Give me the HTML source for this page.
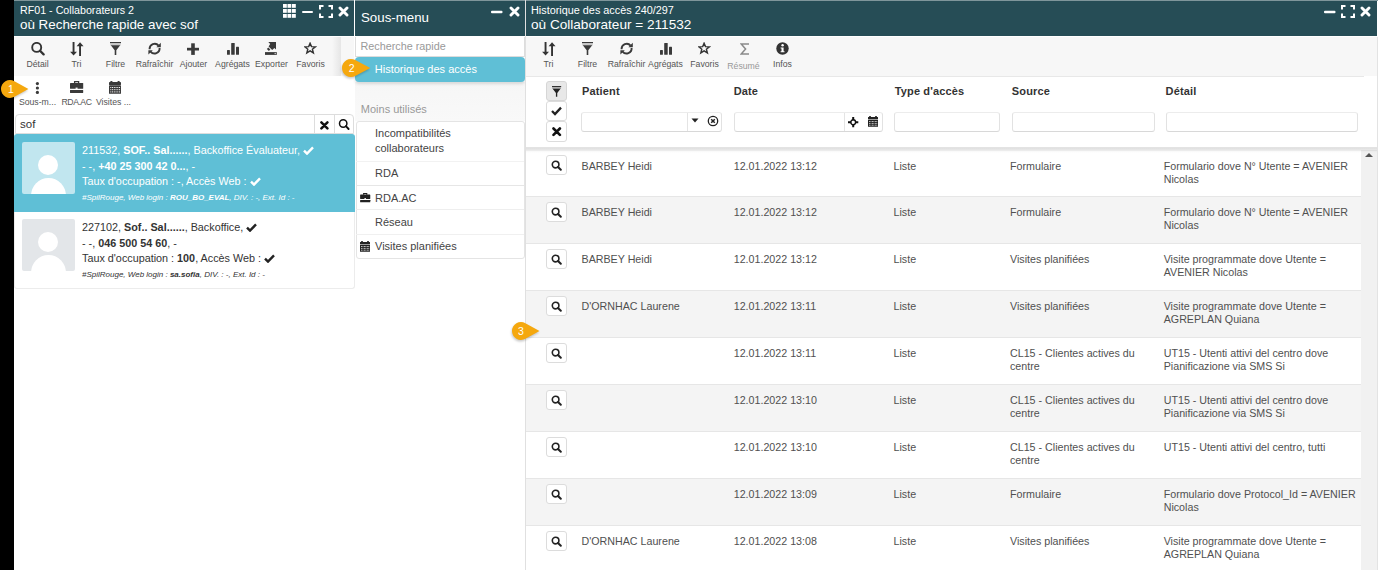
<!DOCTYPE html>
<html><head><meta charset="utf-8">
<style>
*{box-sizing:border-box;margin:0;padding:0}
html,body{width:1378px;height:570px;overflow:hidden;background:#fff;font-family:"Liberation Sans",sans-serif;color:#333}
.a{position:absolute}
.blk{left:0;top:0;width:14px;height:570px;background:#000}
.strip{top:0;height:1px;background:#7f969b}
.hdr{top:1px;height:35px;background:#264d56;color:#fff}
.hline{top:36px;height:1px;background:#fff}
.vsep{top:0;width:1px;height:570px;background:#e6e6e6}
.tb{top:37px;height:39px;background:#f7f7f7}
.btn{position:absolute;width:39px;text-align:center;font-size:9px;color:#555;white-space:nowrap}
.btn svg{position:absolute;left:13px;top:5px}
.btn span{position:absolute;left:0;right:0;top:20px;line-height:11px}
svg{display:block}
.t{position:absolute;white-space:nowrap}
.it{font-size:10.8px;line-height:13px;color:#333}
.sm{font-size:8px;line-height:11px;font-style:italic;color:#333}
.sub{font-size:11px;line-height:13px;color:#444}
.th{top:84px;font-size:11px;line-height:14px;font-weight:bold;color:#333;letter-spacing:0.15px}
.inp{top:112px;height:19.5px;border:1px solid;border-color:#ececec #e2e2e2 #d8d8d8 #e2e2e2;border-radius:3px;background:#fff}
.row{left:0;width:835px;height:47px;border-top:1px solid #e6e6e6}
.sb{left:20px;top:5px;width:21px;height:20px;border:1px solid #dcdcdc;border-radius:3px;background:#fff}
.td{top:9px;font-size:10.7px;line-height:13px;color:#505050}
.lbl{top:59px;font-size:8.7px;line-height:11px;text-align:center;color:#555}
</style></head><body>
<div class="a blk"></div>

<!-- ========== PANEL 1 ========== -->
<div class="a strip" style="left:14px;width:1364px"></div>
<div class="a hdr" style="left:14px;width:340px">
  <div class="t" style="left:6px;top:3px;font-size:10.7px;line-height:13px">RF01 - Collaborateurs 2</div>
  <div class="t" style="left:6px;top:15px;font-size:13.4px;line-height:17px">où Recherche rapide avec sof</div>
</div>
<div class="a hline" style="left:14px;width:340px"></div>
<div class="a" style="left:354px;top:0;width:1px;height:570px;background:#fff"></div>
<div class="a tb" style="left:14px;width:340px"></div>

<!-- p1 header icons -->
<svg class="a" style="left:282px;top:4px" width="15" height="15" viewBox="0 0 15 15" fill="#fff">
<rect x="1" y="0" width="3.8" height="3.8"/><rect x="5.5" y="0" width="3.8" height="3.8"/><rect x="10" y="0" width="3.8" height="3.8"/>
<rect x="1" y="5" width="3.8" height="3.8"/><rect x="5.5" y="5" width="3.8" height="3.8"/><rect x="10" y="5" width="3.8" height="3.8"/>
<rect x="1" y="10" width="3.8" height="3.8"/><rect x="5.5" y="10" width="3.8" height="3.8"/><rect x="10" y="10" width="3.8" height="3.8"/>
</svg>
<div class="a" style="left:302px;top:11px;width:11px;height:2.4px;background:#fff;border-radius:1px"></div>
<svg class="a" style="left:319px;top:5px" width="14" height="13" viewBox="0 0 14 13" fill="none" stroke="#fff" stroke-width="2">
<path d="M1 4.5V1H4.5M9.5 1H13V4.5M13 8.5V12H9.5M4.5 12H1V8.5"/></svg>
<svg class="a" style="left:338px;top:6px" width="11" height="11" viewBox="0 0 11 11" stroke="#fff" stroke-width="2.9" stroke-linecap="round"><path d="M2 2L9 9M9 2L2 9"/></svg>

<!-- p1 toolbar -->
<div class="a" style="left:332px;top:37px;width:9px;height:39px;background:linear-gradient(to right,rgba(0,0,0,0),rgba(0,0,0,0.07))"></div>
<svg class="a" style="left:31px;top:42px" width="14" height="14" viewBox="0 0 14 14" fill="none" stroke="#333">
<circle cx="5.7" cy="5.4" r="4.5" stroke-width="1.9"/><path d="M9 8.8L12.6 12.4" stroke-width="2.3" stroke-linecap="round"/></svg>
<div class="t lbl" style="left:14px;width:47px">Détail</div>
<svg class="a" style="left:70px;top:42px" width="14" height="14" viewBox="0 0 14 14" fill="#333">
<rect x="2.6" y="0" width="1.9" height="11"/><path d="M0.1 9.8H7L3.55 13.6Z"/>
<rect x="9.1" y="3" width="1.9" height="11"/><path d="M6.6 4.2H13.5L10.05 0.2Z"/></svg>
<div class="t lbl" style="left:53px;width:47px">Tri</div>
<svg class="a" style="left:110px;top:42px" width="12" height="13" viewBox="0 0 12 13">
<rect x="0" y="0" width="11" height="1.3" fill="#3a3a3a"/><rect x="0.3" y="1.3" width="10.4" height="2.2" fill="#c8c8c8"/>
<path d="M0.8 3.3H10.2L6.3 8.2V12.9H4.7V8.2Z" fill="#3a3a3a"/></svg>
<div class="t lbl" style="left:92px;width:47px">Filtre</div>
<svg class="a" style="left:148px;top:42px" width="14" height="14" viewBox="0 0 14 14">
<path d="M1.6 7.2A5.1 5.1 0 0 1 10.6 3.6" fill="none" stroke="#3a3a3a" stroke-width="1.9"/>
<path d="M12.8 0.8V5.2H8.4Z" fill="#3a3a3a"/>
<path d="M11.6 6A5.1 5.1 0 0 1 2.6 9.6" fill="none" stroke="#3a3a3a" stroke-width="1.9"/>
<path d="M0.4 12.6V8.2H4.8Z" fill="#3a3a3a"/></svg>
<div class="t lbl" style="left:131px;width:47px">Rafraîchir</div>
<svg class="a" style="left:187px;top:43px" width="12" height="12" viewBox="0 0 12 12" fill="#3a3a3a">
<rect x="4.2" y="0.3" width="3.6" height="11.6"/><rect x="0" y="4.8" width="12" height="2.7"/></svg>
<div class="t lbl" style="left:170px;width:47px">Ajouter</div>
<svg class="a" style="left:227px;top:43px" width="13" height="12" viewBox="0 0 13 12" fill="#3a3a3a">
<rect x="0" y="6.9" width="2.9" height="4.9" rx="0.5"/><rect x="4.2" y="0" width="3.5" height="11.8" rx="0.6"/><rect x="9" y="3.7" width="3" height="8.1" rx="0.5"/></svg>
<div class="t lbl" style="left:209px;width:47px">Agrégats</div>
<svg class="a" style="left:265px;top:42px" width="12" height="13" viewBox="0 0 12 13" fill="#3a3a3a">
<rect x="0" y="10.1" width="11.8" height="2.8"/><circle cx="10.2" cy="11.5" r="0.7" fill="#ddd"/>
<path d="M3.3 0.1H11V7.5L9.4 5.9L7.2 8.1L3.6 4.5L5.2 2Z"/><path d="M2.6 6.2L4.6 8.2" stroke="#3a3a3a" stroke-width="2"/></svg>
<div class="t lbl" style="left:248px;width:47px">Exporter</div>
<svg class="a" style="left:304px;top:42px" width="13" height="13" viewBox="0 0 13 13">
<path d="M6.1 1.2L7.5 4.6L11.4 4.8L8.4 7.2L9.4 10.9L6.1 8.9L2.8 10.9L3.8 7.2L0.8 4.8L4.7 4.6Z" fill="none" stroke="#333" stroke-width="1.4" stroke-linejoin="miter"/></svg>
<div class="t lbl" style="left:287px;width:47px">Favoris</div>
<!-- row 2 -->
<svg class="a" style="left:35px;top:82px" width="5" height="12" viewBox="0 0 5 12" fill="#3a3a3a">
<circle cx="2.4" cy="1.6" r="1.6"/><circle cx="2.4" cy="6" r="1.6"/><circle cx="2.4" cy="10.4" r="1.6"/></svg>
<div class="t lbl" style="left:14px;width:47px;top:97px">Sous-m...</div>
<svg class="a" style="left:70px;top:81px" width="14" height="13" viewBox="0 0 14 13" fill="#3a3a3a">
<path d="M4.6 2.3V0.6H8.6V2.3" fill="none" stroke="#3a3a3a" stroke-width="1.3"/>
<rect x="0" y="2" width="13.2" height="5.7" rx="0.5"/><rect x="0" y="9" width="13.2" height="2.9" rx="0.3"/>
<rect x="5.6" y="6.6" width="2" height="1.3" fill="#fff"/></svg>
<div class="t lbl" style="left:53px;width:47px;top:97px;letter-spacing:-0.5px">RDA.AC</div>
<svg class="a" style="left:109px;top:81px" width="13" height="13" viewBox="0 0 13 13" fill="#3a3a3a">
<rect x="0" y="1" width="12" height="2.9" rx="0.4"/><rect x="1.3" y="0" width="2.2" height="1.5" rx="0.6"/><rect x="8.5" y="0" width="2.2" height="1.5" rx="0.6"/>
<rect x="0" y="4.3" width="12" height="8.5" rx="0.4"/><rect x="1.30" y="6.00" width="1" height="1" fill="#fff"/><rect x="1.30" y="8.20" width="1" height="1" fill="#fff"/><rect x="1.30" y="10.40" width="1" height="1" fill="#fff"/><rect x="3.05" y="6.00" width="1" height="1" fill="#fff"/><rect x="3.05" y="8.20" width="1" height="1" fill="#fff"/><rect x="3.05" y="10.40" width="1" height="1" fill="#fff"/><rect x="4.80" y="6.00" width="1" height="1" fill="#fff"/><rect x="4.80" y="8.20" width="1" height="1" fill="#fff"/><rect x="4.80" y="10.40" width="1" height="1" fill="#fff"/><rect x="6.55" y="6.00" width="1" height="1" fill="#fff"/><rect x="6.55" y="8.20" width="1" height="1" fill="#fff"/><rect x="6.55" y="10.40" width="1" height="1" fill="#fff"/><rect x="8.30" y="6.00" width="1" height="1" fill="#fff"/><rect x="8.30" y="8.20" width="1" height="1" fill="#fff"/><rect x="8.30" y="10.40" width="1" height="1" fill="#fff"/><rect x="10.05" y="6.00" width="1" height="1" fill="#fff"/><rect x="10.05" y="8.20" width="1" height="1" fill="#fff"/><rect x="10.05" y="10.40" width="1" height="1" fill="#fff"/></svg>
<div class="t lbl" style="left:90px;width:47px;top:97px">Visites ...</div>



<!-- p1 search -->
<div class="a" style="left:15px;top:114px;width:339px;height:20px;border:1px solid #ddd;border-radius:4px 4px 0 0;background:#fff"></div>
<div class="t" style="left:20px;top:117px;font-size:11.5px;line-height:14px;color:#333">sof</div>
<div class="a" style="left:314px;top:115px;width:1px;height:19px;background:#ddd"></div>
<div class="a" style="left:334px;top:115px;width:1px;height:19px;background:#ddd"></div>
<svg class="a" style="left:320px;top:120.5px" width="9" height="9" viewBox="0 0 9 9" stroke="#111" stroke-width="2.5" stroke-linecap="round"><path d="M1.4 1.4L7.4 7.4M7.4 1.4L1.4 7.4"/></svg>
<svg class="a" style="left:338px;top:118px" width="12" height="13" viewBox="0 0 12 13" fill="none" stroke="#111">
<circle cx="5.2" cy="5.5" r="3.7" stroke-width="1.5"/><path d="M7.9 8.2L10.6 11" stroke-width="1.9" stroke-linecap="round"/></svg>
<!-- item 1 -->
<div class="a" style="left:14px;top:134px;width:340.5px;height:78px;background:#5fbfd6;border-radius:3px 3px 0 0"></div>
<div class="a" style="left:22px;top:142px;width:53px;height:52px;background:#c1e6ef;border-radius:2px;overflow:hidden">
<div class="a" style="left:16px;top:13px;width:20px;height:20px;border-radius:50%;background:#fff"></div>
<div class="a" style="left:9px;top:36px;width:35px;height:30px;border-radius:50% 50% 0 0/60% 60% 0 0;background:#fff"></div>
</div>
<div class="t it" style="left:82px;top:143.5px;color:#fff">211532, <b>SOF.. Sal......</b>, Backoffice Évaluateur, <svg style="display:inline-block;vertical-align:-1px" width="11" height="9" viewBox="0 0 11 9"><path d="M1 4.6L4 7.6L10 1.4" fill="none" stroke="#fff" stroke-width="2.4"/></svg></div>
<div class="t it" style="left:82px;top:159.5px;color:#fff">- -, <b>+40 25 300 42 0...</b>, -</div>
<div class="t it" style="left:82px;top:175px;color:#fff">Taux d'occupation : -, Accès Web : <svg style="display:inline-block;vertical-align:-1px" width="11" height="9" viewBox="0 0 11 9"><path d="M1 4.6L4 7.6L10 1.4" fill="none" stroke="#fff" stroke-width="2.4"/></svg></div>
<div class="t sm" style="left:82px;top:192px;color:#fff">#SpilRouge, Web login : <b>ROU_BO_EVAL</b>, DIV. : -, Ext. Id : -</div>
<!-- item 2 -->
<div class="a" style="left:14px;top:212px;width:341px;height:77px;background:#fff;border:1px solid #ececec;border-top:none;border-radius:0 0 3px 3px"></div>
<div class="a" style="left:22px;top:219px;width:53px;height:52px;background:#e3e6e9;border-radius:2px;overflow:hidden">
<div class="a" style="left:16px;top:13px;width:20px;height:20px;border-radius:50%;background:#fff"></div>
<div class="a" style="left:9px;top:36px;width:35px;height:30px;border-radius:50% 50% 0 0/60% 60% 0 0;background:#fff"></div>
</div>
<div class="t it" style="left:82px;top:221px">227102, <b>Sof.. Sal......</b>, Backoffice, <svg style="display:inline-block;vertical-align:-1px" width="11" height="9" viewBox="0 0 11 9"><path d="M1 4.6L4 7.6L10 1.4" fill="none" stroke="#222" stroke-width="2.4"/></svg></div>
<div class="t it" style="left:82px;top:236.5px">- -, <b>046 500 54 60</b>, -</div>
<div class="t it" style="left:82px;top:252px">Taux d'occupation : <b>100</b>, Accès Web : <svg style="display:inline-block;vertical-align:-1px" width="11" height="9" viewBox="0 0 11 9"><path d="M1 4.6L4 7.6L10 1.4" fill="none" stroke="#222" stroke-width="2.4"/></svg></div>
<div class="t sm" style="left:82px;top:269.3px">#SpilRouge, Web login : <b>sa.sofia</b>, DIV. : -, Ext. Id : -</div>

<!-- ========== PANEL 2 ========== -->
<div class="a hdr" style="left:355px;width:170px">
  <div class="t" style="left:6px;top:9px;font-size:13.3px;line-height:16px">Sous-menu</div>
</div>

<svg class="a" style="left:491px;top:10px" width="12" height="4" viewBox="0 0 12 4"><rect x="0" y="0.8" width="11.5" height="2.4" rx="1" fill="#fff"/></svg>
<svg class="a" style="left:509px;top:6px" width="11" height="11" viewBox="0 0 11 11" stroke="#fff" stroke-width="2.9" stroke-linecap="round"><path d="M2 2L9 9M9 2L2 9"/></svg>
<div class="a hline" style="left:355px;width:170px"></div>
<div class="a" style="left:355px;top:82px;width:170px;height:39px;background:linear-gradient(#f6f6f6,#f9f9f9)"></div>
<div class="a" style="left:355px;top:37px;width:170px;height:20px;border:1px solid #ddd;border-top:none;background:#fff"></div>
<div class="t" style="left:360.5px;top:40px;font-size:10.8px;line-height:13px;color:#999">Recherche rapide</div>
<div class="a" style="left:355px;top:57px;width:170px;height:25px;background:#5fbfd6;border-radius:4px;box-shadow:0 2px 3px rgba(0,0,0,0.12)"></div>
<div class="t" style="left:374.8px;top:62.5px;font-size:11px;line-height:13px;color:#fff">Historique des accès</div>
<div class="t" style="left:360.8px;top:102.5px;font-size:11px;line-height:13px;color:#999">Moins utilisés</div>
<div class="a" style="left:355.5px;top:121px;width:169px;height:137.5px;background:#fff;border:1px solid #e4e4e4;border-radius:3px"></div>
<div class="a" style="left:356px;top:161px;width:168px;height:1px;background:#f2f2f2"></div>
<div class="a" style="left:356px;top:185px;width:168px;height:1px;background:#e6e6e6"></div>
<div class="a" style="left:356px;top:209px;width:168px;height:1px;background:#eeeeee"></div>
<div class="a" style="left:356px;top:234px;width:168px;height:1px;background:#f0f0f0"></div>
<div class="t sub" style="left:375px;top:127px">Incompatibilités</div>
<div class="t sub" style="left:375px;top:142px">collaborateurs</div>
<div class="t sub" style="left:375px;top:167px">RDA</div>
<svg class="a" style="left:360px;top:193px" width="11" height="10" viewBox="0 0 14 13" fill="#222">
<path d="M4.6 2.3V0.6H8.6V2.3" fill="none" stroke="#222" stroke-width="1.5"/>
<rect x="0" y="2" width="13.2" height="5.7" rx="0.5"/><rect x="0" y="9" width="13.2" height="2.9" rx="0.3"/>
<rect x="5.6" y="6.6" width="2" height="1.3" fill="#fff"/></svg>
<div class="t sub" style="left:375px;top:191.5px">RDA.AC</div>
<div class="t sub" style="left:375px;top:216px">Réseau</div>
<svg class="a" style="left:360px;top:241px" width="10" height="11" viewBox="0 0 12 13" fill="#222">
<rect x="0" y="1" width="12" height="2.9" rx="0.4"/><rect x="1.3" y="0" width="2.2" height="1.5" rx="0.6"/><rect x="8.5" y="0" width="2.2" height="1.5" rx="0.6"/>
<rect x="0" y="4.3" width="12" height="8.5" rx="0.4"/><rect x="1.30" y="6.00" width="1" height="1" fill="#fff"/><rect x="1.30" y="8.20" width="1" height="1" fill="#fff"/><rect x="1.30" y="10.40" width="1" height="1" fill="#fff"/><rect x="3.05" y="6.00" width="1" height="1" fill="#fff"/><rect x="3.05" y="8.20" width="1" height="1" fill="#fff"/><rect x="3.05" y="10.40" width="1" height="1" fill="#fff"/><rect x="4.80" y="6.00" width="1" height="1" fill="#fff"/><rect x="4.80" y="8.20" width="1" height="1" fill="#fff"/><rect x="4.80" y="10.40" width="1" height="1" fill="#fff"/><rect x="6.55" y="6.00" width="1" height="1" fill="#fff"/><rect x="6.55" y="8.20" width="1" height="1" fill="#fff"/><rect x="6.55" y="10.40" width="1" height="1" fill="#fff"/><rect x="8.30" y="6.00" width="1" height="1" fill="#fff"/><rect x="8.30" y="8.20" width="1" height="1" fill="#fff"/><rect x="8.30" y="10.40" width="1" height="1" fill="#fff"/><rect x="10.05" y="6.00" width="1" height="1" fill="#fff"/><rect x="10.05" y="8.20" width="1" height="1" fill="#fff"/><rect x="10.05" y="10.40" width="1" height="1" fill="#fff"/></svg>
<div class="t sub" style="left:375px;top:240px">Visites planifiées</div>

<div class="a" style="left:525px;top:0;width:1px;height:570px;background:#e0e0e0"></div>

<!-- ========== PANEL 3 ========== -->
<div class="a hdr" style="left:526px;width:851px">
  <div class="t" style="left:5px;top:3px;font-size:10.85px;line-height:13px">Historique des accès 240/297</div>
  <div class="t" style="left:5px;top:15px;font-size:13.6px;line-height:17px">où Collaborateur = 211532</div>
</div>
<div class="a hline" style="left:526px;width:851px"></div>
<div class="a tb" style="left:526px;width:851px"></div>

<svg class="a" style="left:1324px;top:10px" width="12" height="4" viewBox="0 0 12 4"><rect x="0" y="0.8" width="11.5" height="2.4" rx="1" fill="#fff"/></svg>
<svg class="a" style="left:1341px;top:5px" width="14" height="13" viewBox="0 0 14 13" fill="none" stroke="#fff" stroke-width="2"><path d="M1 4.5V1H4.5M9.5 1H13V4.5M13 8.5V12H9.5M4.5 12H1V8.5"/></svg>
<svg class="a" style="left:1360px;top:6px" width="11" height="11" viewBox="0 0 11 11" stroke="#fff" stroke-width="2.9" stroke-linecap="round"><path d="M2 2L9 9M9 2L2 9"/></svg>
<div class="a" style="left:526px;top:76px;width:838px;height:1px;background:#e8e8e8"></div>
<div class="a" style="left:1377px;top:37px;width:1px;height:533px;background:#e3e3e3;z-index:5"></div>
<svg class="a" style="left:542px;top:42px" width="14" height="14" viewBox="0 0 14 14" fill="#333">
<rect x="2.6" y="0" width="1.9" height="11"/><path d="M0.1 9.8H7L3.55 13.6Z"/>
<rect x="9.1" y="3" width="1.9" height="11"/><path d="M6.6 4.2H13.5L10.05 0.2Z"/></svg>
<div class="t lbl" style="left:525px;width:47px">Tri</div>
<svg class="a" style="left:582px;top:42px" width="12" height="13" viewBox="0 0 12 13">
<rect x="0" y="0" width="11" height="1.3" fill="#3a3a3a"/><rect x="0.3" y="1.3" width="10.4" height="2.2" fill="#c8c8c8"/>
<path d="M0.8 3.3H10.2L6.3 8.2V12.9H4.7V8.2Z" fill="#3a3a3a"/></svg>
<div class="t lbl" style="left:564px;width:47px">Filtre</div>
<svg class="a" style="left:620px;top:42px" width="14" height="14" viewBox="0 0 14 14">
<path d="M1.6 7.2A5.1 5.1 0 0 1 10.6 3.6" fill="none" stroke="#3a3a3a" stroke-width="1.9"/>
<path d="M12.8 0.8V5.2H8.4Z" fill="#3a3a3a"/>
<path d="M11.6 6A5.1 5.1 0 0 1 2.6 9.6" fill="none" stroke="#3a3a3a" stroke-width="1.9"/>
<path d="M0.4 12.6V8.2H4.8Z" fill="#3a3a3a"/></svg>
<div class="t lbl" style="left:603px;width:47px">Rafraîchir</div>
<svg class="a" style="left:660px;top:43px" width="13" height="12" viewBox="0 0 13 12" fill="#3a3a3a">
<rect x="0" y="6.9" width="2.9" height="4.9" rx="0.5"/><rect x="4.2" y="0" width="3.5" height="11.8" rx="0.6"/><rect x="9" y="3.7" width="3" height="8.1" rx="0.5"/></svg>
<div class="t lbl" style="left:642px;width:47px">Agrégats</div>
<svg class="a" style="left:698px;top:42px" width="13" height="13" viewBox="0 0 13 13">
<path d="M6.1 1.2L7.5 4.6L11.4 4.8L8.4 7.2L9.4 10.9L6.1 8.9L2.8 10.9L3.8 7.2L0.8 4.8L4.7 4.6Z" fill="none" stroke="#333" stroke-width="1.4" stroke-linejoin="miter"/></svg>
<div class="t lbl" style="left:681px;width:47px">Favoris</div>
<svg class="a" style="left:739.5px;top:43px" width="10" height="12" viewBox="0 0 10 12"><path d="M9 1H1.2L5.6 6L1.2 11H9" fill="none" stroke="#8a8a8a" stroke-width="1.5"/></svg>
<div class="t lbl" style="left:720px;width:47px;color:#999;top:60.5px">Résumé</div>
<svg class="a" style="left:776px;top:42px" width="13" height="13" viewBox="0 0 13 13"><circle cx="6.5" cy="6.5" r="6.2" fill="#333"/>
<circle cx="6.6" cy="3.3" r="1.2" fill="#fff"/><path d="M4.6 5.4H7.6V9.2H8.5V10.3H4.6V9.2H5.5V6.5H4.6Z" fill="#fff"/></svg>
<div class="t lbl" style="left:759px;width:47px">Infos</div>
<!-- table header -->
<div class="a" style="left:526px;top:77px;width:851px;height:70px;background:#fff;z-index:2"></div>
<div class="a" style="left:526px;top:147px;width:851px;height:6px;z-index:2;background:linear-gradient(rgba(0,0,0,0.10),rgba(0,0,0,0.12) 20%,rgba(0,0,0,0.085) 55%,rgba(0,0,0,0.02) 75%,rgba(0,0,0,0))"></div>
<div class="a" style="z-index:3;left:0;top:0">
<div class="a" style="left:546px;top:81px;width:21px;height:20px;background:#e8e8e8;border:1px solid #d6d6d6;border-radius:3px"></div>
<svg class="a" style="left:551.5px;top:86px" width="10" height="11" viewBox="0 0 12 13">
<rect x="0" y="0" width="11" height="1.3" fill="#222"/><rect x="0.3" y="1.3" width="10.4" height="2.2" fill="#aaa"/>
<path d="M0.8 3.3H10.2L6.3 8.2V12.9H4.7V8.2Z" fill="#222"/></svg>
<div class="a" style="left:546px;top:101px;width:21px;height:20px;background:#fff;border:1px solid #dcdcdc;border-radius:3px"></div>
<svg class="a" style="left:551px;top:106px" width="11" height="10" viewBox="0 0 11 10"><path d="M1 5L4 8L10 1.6" fill="none" stroke="#222" stroke-width="2.3"/></svg>
<div class="a" style="left:546px;top:121px;width:21px;height:20.5px;background:#fff;border:1px solid #dcdcdc;border-radius:3px"></div>
<svg class="a" style="left:552px;top:127px" width="10" height="10" viewBox="0 0 10 10" stroke="#111" stroke-width="2.6" stroke-linecap="round"><path d="M1.5 1.5L7.9 7.9M7.9 1.5L1.5 7.9"/></svg>
<div class="t th" style="left:582px">Patient</div>
<div class="t th" style="left:733.7px">Date</div>
<div class="t th" style="left:894.7px">Type d'accès</div>
<div class="t th" style="left:1011.8px">Source</div>
<div class="t th" style="left:1165.6px">Détail</div>
<div class="a inp" style="left:581px;width:141px"></div>
<div class="a" style="left:687px;top:113px;width:1px;height:18px;background:#e4e4e4"></div>
<svg class="a" style="left:691px;top:118px" width="8" height="5" viewBox="0 0 8 5"><path d="M0.5 0.5H7.5L4 4.5Z" fill="#222"/></svg>
<svg class="a" style="left:707px;top:115px" width="12" height="12" viewBox="0 0 12 12"><circle cx="6" cy="6" r="4.7" fill="none" stroke="#222" stroke-width="1.3"/><path d="M4.2 4.2L7.8 7.8M7.8 4.2L4.2 7.8" stroke="#222" stroke-width="1.5"/></svg>
<div class="a inp" style="left:733.7px;width:149px"></div>
<div class="a" style="left:843.7px;top:113px;width:1px;height:18px;background:#e4e4e4"></div>
<svg class="a" style="left:848px;top:117px" width="11" height="11" viewBox="0 0 11 11" fill="#111"><path d="M4.2 0H6.2V3.3H4.2ZM4.2 7H6.2V10.3H4.2ZM0 4.2H3.3V6.2H0ZM7 4.2H10.3V6.2H7Z"/><circle cx="5.2" cy="5.2" r="2.4" fill="none" stroke="#111" stroke-width="1.4"/></svg>
<svg class="a" style="left:867.5px;top:116px" width="10" height="11" viewBox="0 0 12 13" fill="#222">
<rect x="0" y="1" width="12" height="2.9" rx="0.4"/><rect x="1.3" y="0" width="2.2" height="1.5" rx="0.6"/><rect x="8.5" y="0" width="2.2" height="1.5" rx="0.6"/>
<rect x="0" y="4.3" width="12" height="8.5" rx="0.4"/><rect x="1.30" y="6.00" width="1" height="1" fill="#fff"/><rect x="1.30" y="8.20" width="1" height="1" fill="#fff"/><rect x="1.30" y="10.40" width="1" height="1" fill="#fff"/><rect x="3.05" y="6.00" width="1" height="1" fill="#fff"/><rect x="3.05" y="8.20" width="1" height="1" fill="#fff"/><rect x="3.05" y="10.40" width="1" height="1" fill="#fff"/><rect x="4.80" y="6.00" width="1" height="1" fill="#fff"/><rect x="4.80" y="8.20" width="1" height="1" fill="#fff"/><rect x="4.80" y="10.40" width="1" height="1" fill="#fff"/><rect x="6.55" y="6.00" width="1" height="1" fill="#fff"/><rect x="6.55" y="8.20" width="1" height="1" fill="#fff"/><rect x="6.55" y="10.40" width="1" height="1" fill="#fff"/><rect x="8.30" y="6.00" width="1" height="1" fill="#fff"/><rect x="8.30" y="8.20" width="1" height="1" fill="#fff"/><rect x="8.30" y="10.40" width="1" height="1" fill="#fff"/><rect x="10.05" y="6.00" width="1" height="1" fill="#fff"/><rect x="10.05" y="8.20" width="1" height="1" fill="#fff"/><rect x="10.05" y="10.40" width="1" height="1" fill="#fff"/></svg>
<div class="a inp" style="left:894.2px;width:106.2px"></div>
<div class="a inp" style="left:1011.5px;width:143px"></div>
<div class="a inp" style="left:1165.5px;width:192.7px"></div>
</div>
<div class="a" style="left:526px;top:149px;width:835px;height:421px;overflow:hidden">
<div class="a row" style="top:0px;background:#fff;border-top:none"><div class="a sb" style="top:6.3px"></div><svg class="a" style="left:25px;top:11.2px" width="11" height="11" viewBox="0 0 11 11" fill="none" stroke="#222"><circle cx="4.6" cy="4.6" r="3.3" stroke-width="1.6"/><path d="M7 7L9.8 9.8" stroke-width="2" stroke-linecap="round"/></svg><div class="t td" style="top:10.8px;left:55.5px">BARBEY Heidi</div><div class="t td" style="top:10.8px;left:207.7px">12.01.2022 13:12</div><div class="t td" style="top:10.8px;left:367.5px">Liste</div><div class="t td" style="top:10.8px;left:484px">Formulaire</div><div class="t td" style="top:10.8px;left:637.7px">Formulario dove N° Utente = AVENIER<br>Nicolas</div></div>
<div class="a row" style="top:47px;background:#f4f4f4"><div class="a sb"></div><svg class="a" style="left:25px;top:10px" width="11" height="11" viewBox="0 0 11 11" fill="none" stroke="#222"><circle cx="4.6" cy="4.6" r="3.3" stroke-width="1.6"/><path d="M7 7L9.8 9.8" stroke-width="2" stroke-linecap="round"/></svg><div class="t td" style="left:55.5px">BARBEY Heidi</div><div class="t td" style="left:207.7px">12.01.2022 13:12</div><div class="t td" style="left:367.5px">Liste</div><div class="t td" style="left:484px">Formulaire</div><div class="t td" style="left:637.7px">Formulario dove N° Utente = AVENIER<br>Nicolas</div></div>
<div class="a row" style="top:94px;background:#fff"><div class="a sb"></div><svg class="a" style="left:25px;top:10px" width="11" height="11" viewBox="0 0 11 11" fill="none" stroke="#222"><circle cx="4.6" cy="4.6" r="3.3" stroke-width="1.6"/><path d="M7 7L9.8 9.8" stroke-width="2" stroke-linecap="round"/></svg><div class="t td" style="left:55.5px">BARBEY Heidi</div><div class="t td" style="left:207.7px">12.01.2022 13:12</div><div class="t td" style="left:367.5px">Liste</div><div class="t td" style="left:484px">Visites planifiées</div><div class="t td" style="left:637.7px">Visite programmate dove Utente =<br>AVENIER Nicolas</div></div>
<div class="a row" style="top:141px;background:#f4f4f4"><div class="a sb"></div><svg class="a" style="left:25px;top:10px" width="11" height="11" viewBox="0 0 11 11" fill="none" stroke="#222"><circle cx="4.6" cy="4.6" r="3.3" stroke-width="1.6"/><path d="M7 7L9.8 9.8" stroke-width="2" stroke-linecap="round"/></svg><div class="t td" style="left:55.5px">D'ORNHAC Laurene</div><div class="t td" style="left:207.7px">12.01.2022 13:11</div><div class="t td" style="left:367.5px">Liste</div><div class="t td" style="left:484px">Visites planifiées</div><div class="t td" style="left:637.7px">Visite programmate dove Utente =<br>AGREPLAN Quiana</div></div>
<div class="a row" style="top:188px;background:#fff"><div class="a sb"></div><svg class="a" style="left:25px;top:10px" width="11" height="11" viewBox="0 0 11 11" fill="none" stroke="#222"><circle cx="4.6" cy="4.6" r="3.3" stroke-width="1.6"/><path d="M7 7L9.8 9.8" stroke-width="2" stroke-linecap="round"/></svg><div class="t td" style="left:207.7px">12.01.2022 13:11</div><div class="t td" style="left:367.5px">Liste</div><div class="t td" style="left:484px">CL15 - Clientes actives du<br>centre</div><div class="t td" style="left:637.7px">UT15 - Utenti attivi del centro dove<br>Pianificazione via SMS Si</div></div>
<div class="a row" style="top:235px;background:#f4f4f4"><div class="a sb"></div><svg class="a" style="left:25px;top:10px" width="11" height="11" viewBox="0 0 11 11" fill="none" stroke="#222"><circle cx="4.6" cy="4.6" r="3.3" stroke-width="1.6"/><path d="M7 7L9.8 9.8" stroke-width="2" stroke-linecap="round"/></svg><div class="t td" style="left:207.7px">12.01.2022 13:10</div><div class="t td" style="left:367.5px">Liste</div><div class="t td" style="left:484px">CL15 - Clientes actives du<br>centre</div><div class="t td" style="left:637.7px">UT15 - Utenti attivi del centro dove<br>Pianificazione via SMS Si</div></div>
<div class="a row" style="top:282px;background:#fff"><div class="a sb"></div><svg class="a" style="left:25px;top:10px" width="11" height="11" viewBox="0 0 11 11" fill="none" stroke="#222"><circle cx="4.6" cy="4.6" r="3.3" stroke-width="1.6"/><path d="M7 7L9.8 9.8" stroke-width="2" stroke-linecap="round"/></svg><div class="t td" style="left:207.7px">12.01.2022 13:10</div><div class="t td" style="left:367.5px">Liste</div><div class="t td" style="left:484px">CL15 - Clientes actives du<br>centre</div><div class="t td" style="left:637.7px">UT15 - Utenti attivi del centro, tutti</div></div>
<div class="a row" style="top:329px;background:#f4f4f4"><div class="a sb"></div><svg class="a" style="left:25px;top:10px" width="11" height="11" viewBox="0 0 11 11" fill="none" stroke="#222"><circle cx="4.6" cy="4.6" r="3.3" stroke-width="1.6"/><path d="M7 7L9.8 9.8" stroke-width="2" stroke-linecap="round"/></svg><div class="t td" style="left:207.7px">12.01.2022 13:09</div><div class="t td" style="left:367.5px">Liste</div><div class="t td" style="left:484px">Formulaire</div><div class="t td" style="left:637.7px">Formulario dove Protocol_Id = AVENIER<br>Nicolas</div></div>
<div class="a row" style="top:376px;background:#fff"><div class="a sb"></div><svg class="a" style="left:25px;top:10px" width="11" height="11" viewBox="0 0 11 11" fill="none" stroke="#222"><circle cx="4.6" cy="4.6" r="3.3" stroke-width="1.6"/><path d="M7 7L9.8 9.8" stroke-width="2" stroke-linecap="round"/></svg><div class="t td" style="left:55.5px">D'ORNHAC Laurene</div><div class="t td" style="left:207.7px">12.01.2022 13:08</div><div class="t td" style="left:367.5px">Liste</div><div class="t td" style="left:484px">Visites planifiées</div><div class="t td" style="left:637.7px">Visite programmate dove Utente =<br>AGREPLAN Quiana</div></div>
</div>
<div class="a" style="left:1361px;top:150px;width:16px;height:420px;background:#f1f1f1"></div>
<svg class="a" style="left:1364px;top:152px" width="10" height="6" viewBox="0 0 10 6"><path d="M1 5H9L5 1Z" fill="#555"/></svg>


<svg width="0" height="0" style="position:absolute"><defs><filter id="bl" x="-20%" y="-20%" width="140%" height="140%"><feGaussianBlur stdDeviation="0.9"/></filter></defs></svg><svg class="a" style="left:-2.4px;top:76.8px;z-index:10;overflow:visible" width="33" height="26" viewBox="0 0 33 26">
<path d="M30.40 12.00L16.40 4.15A9 9 0 1 0 16.40 19.85Z" fill="rgba(0,0,0,0.22)" transform="translate(-0.6 1.6)" filter="url(#bl)"/>
<path d="M30.40 12.00L16.40 4.15A9 9 0 1 0 16.40 19.85Z" fill="#f5a80e"/>
<text x="12.80" y="15.60" text-anchor="middle" font-family="Liberation Sans" font-size="10.5" fill="#fff">1</text></svg><svg class="a" style="left:339.0px;top:55.5px;z-index:10;overflow:visible" width="34" height="26" viewBox="0 0 34 26">
<path d="M31.30 12.00L16.20 4.04A9 9 0 1 0 16.20 19.96Z" fill="rgba(0,0,0,0.22)" transform="translate(-0.6 1.6)" filter="url(#bl)"/>
<path d="M31.30 12.00L16.20 4.04A9 9 0 1 0 16.20 19.96Z" fill="#f5a80e"/>
<text x="12.60" y="15.60" text-anchor="middle" font-family="Liberation Sans" font-size="10.5" fill="#fff">2</text></svg><svg class="a" style="left:508.5px;top:318.8px;z-index:10;overflow:visible" width="34" height="26" viewBox="0 0 34 26">
<path d="M30.50 12.00L16.38 4.14A9 9 0 1 0 16.38 19.86Z" fill="rgba(0,0,0,0.22)" transform="translate(-0.6 1.6)" filter="url(#bl)"/>
<path d="M30.50 12.00L16.38 4.14A9 9 0 1 0 16.38 19.86Z" fill="#f5a80e"/>
<text x="12.00" y="15.60" text-anchor="middle" font-family="Liberation Sans" font-size="10.5" fill="#fff">3</text></svg>
</body></html>
